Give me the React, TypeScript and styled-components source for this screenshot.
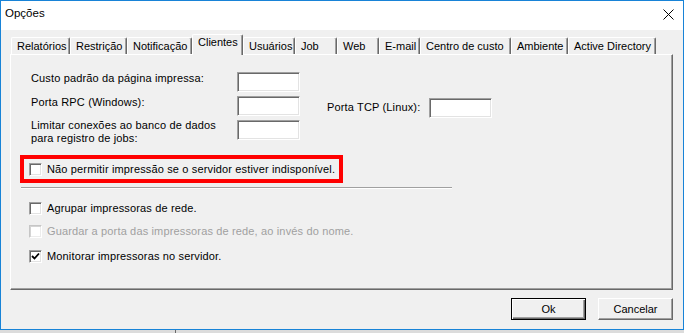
import React from 'react';
import styled, { createGlobalStyle } from 'styled-components';

const Global = createGlobalStyle`
  html, body { margin: 0; padding: 0; background: #dcdcdc; }
  body { font-family: "Liberation Sans", Arial, sans-serif; font-size: 11px; color: #000; }
  * { box-sizing: border-box; }
`;

const Window = styled.div`
  width: 684px;
  height: 330px;
  border: 1px solid #1883d7;
  display: flex;
  flex-direction: column;
  background: #f0f0f0;
`;

const TitleBar = styled.div`
  height: 29px;
  flex: none;
  background: #fff;
  display: flex;
  align-items: flex-start;
  justify-content: space-between;
  padding: 5px 9px 0 4px;
`;

const Title = styled.span`
  font-size: 11.5px;
  line-height: 14px;
  color: #000;
`;

const CloseBtn = styled.span`
  display: flex;
  margin-top: 3px;
`;

const Body = styled.div`
  flex: 1;
  display: flex;
  flex-direction: column;
  padding: 4px 10px 9px 9px;
`;

const TabStrip = styled.div`
  height: 20px;
  flex: none;
  display: flex;
  align-items: flex-end;
  padding-left: 1px;
  position: relative;
  z-index: 1;
`;

const Tab = styled.div<{ $w: number; $sel?: boolean }>`
  width: ${(p) => p.$w}px;
  height: ${(p) => (p.$sel ? 21 : 17)}px;
  margin-bottom: ${(p) => (p.$sel ? -1 : 0)}px;
  background: #f0f0f0;
  border-top: 1px solid #fff;
  border-left: 1px solid #fff;
  border-right: 1px solid #696969;
  box-shadow: inset -1px 0 0 #a0a0a0;
  border-radius: 2px 2px 0 0;
  padding: ${(p) => (p.$sel ? 1 : 2)}px 0 0 5px;
  line-height: 13px;
  white-space: nowrap;
`;

const Panel = styled.div`
  flex: 1;
  display: flex;
  flex-direction: column;
  border-top: 1px solid #fff;
  border-left: 1px solid #fff;
  border-right: 1px solid #696969;
  border-bottom: 1px solid #696969;
  box-shadow: inset -1px -1px 0 #a0a0a0;
  padding: 17px 0 0 9px;
  letter-spacing: 0.15px;
`;

const Form = styled.div`
  margin-left: 11px;
  display: grid;
  grid-auto-rows: 20px;
  row-gap: 4px;
`;

const FormRow = styled.div`
  display: flex;
  align-items: flex-start;
`;

const Label = styled.div<{ $w: number; $dy?: number }>`
  width: ${(p) => p.$w}px;
  line-height: 13px;
  margin-top: ${(p) => p.$dy ?? 0}px;
  white-space: nowrap;
`;

const Field = styled.div<{ $dy?: number }>`
  width: 63px;
  height: 20px;
  margin-top: ${(p) => p.$dy ?? 0}px;
  background: #fff;
  border-top: 1px solid #a0a0a0;
  border-left: 1px solid #a0a0a0;
  border-right: 1px solid #fff;
  border-bottom: 1px solid #fff;
  box-shadow: inset 1px 1px 0 #696969, inset -1px -1px 0 #e3e3e3;
`;

const Spacer = styled.div<{ $w: number }>`
  width: ${(p) => p.$w}px;
  flex: none;
`;

const Highlight = styled.div`
  margin-top: 15px;
  width: 323px;
  height: 28px;
  border: 4px solid #ff0000;
  display: flex;
  align-items: center;
  padding-left: 5px;
`;

const Separator = styled.div`
  margin: 4px 0 0 1px;
  width: 431px;
  height: 2px;
  border-top: 1px solid #a0a0a0;
  border-bottom: 1px solid #fff;
`;

const CheckRow = styled.div<{ $mt?: number; $disabled?: boolean }>`
  display: flex;
  align-items: center;
  gap: 5px;
  margin: ${(p) => p.$mt ?? 0}px 0 0 9px;
  height: 13px;
  color: ${(p) => (p.$disabled ? '#a0a0a0' : '#000')};
  line-height: 13px;
  white-space: nowrap;
`;

const InlineCheck = styled(CheckRow)`
  margin: 0;
`;

const Box = styled.div<{ $disabled?: boolean }>`
  width: 13px;
  height: 13px;
  flex: none;
  background: #fff;
  border-top: 1px solid ${(p) => (p.$disabled ? '#c6c6c6' : '#a0a0a0')};
  border-left: 1px solid ${(p) => (p.$disabled ? '#c6c6c6' : '#a0a0a0')};
  border-right: 1px solid #fff;
  border-bottom: 1px solid #fff;
  box-shadow: ${(p) =>
    p.$disabled
      ? 'inset 1px 1px 0 #d4d4d4, inset -1px -1px 0 #ececec'
      : 'inset 1px 1px 0 #696969, inset -1px -1px 0 #e3e3e3'};
  display: flex;
  align-items: center;
  justify-content: center;
`;

const ButtonRow = styled.div`
  margin-top: 8px;
  height: 22px;
  flex: none;
  display: flex;
  justify-content: flex-end;
  gap: 12px;
`;

const Button = styled.div<{ $default?: boolean }>`
  width: 75px;
  height: 22px;
  display: flex;
  align-items: center;
  justify-content: center;
  background: #f0f0f0;
  line-height: 13px;
  ${(p) =>
    p.$default
      ? `border: 1px solid #000;
         box-shadow: inset 1px 1px 0 #fff, inset -1px -1px 0 #696969, inset -2px -2px 0 #a0a0a0;`
      : `border-top: 1px solid #fff;
         border-left: 1px solid #fff;
         border-right: 1px solid #696969;
         border-bottom: 1px solid #696969;
         box-shadow: inset -1px -1px 0 #a0a0a0;`}
`;

const Below = styled.div`
  height: 3px;
  padding-left: 175px;
  display: flex;
`;

const BelowLine = styled.div`
  width: 1px;
  background: #6a6a6a;
`;

const tabs: { label: string; w: number; sel?: boolean }[] = [
  { label: 'Relatórios', w: 59 },
  { label: 'Restrição', w: 57 },
  { label: 'Notificação', w: 65 },
  { label: 'Clientes', w: 51, sel: true },
  { label: 'Usuários', w: 52 },
  { label: 'Job', w: 42 },
  { label: 'Web', w: 42 },
  { label: 'E-mail', w: 41 },
  { label: 'Centro de custo', w: 91 },
  { label: 'Ambiente', w: 57 },
  { label: 'Active Directory', w: 88 },
];

const Check = () => (
  <svg width="9" height="9" viewBox="0 0 9 9">
    <polyline points="1,4 3.5,6.5 8,1.5" fill="none" stroke="#000" strokeWidth="1.8" />
  </svg>
);

export default function App() {
  return (
    <>
      <Global />
      <Window>
        <TitleBar>
          <Title>Opções</Title>
          <CloseBtn>
            <svg width="11" height="11" viewBox="0 0 11 11">
              <path d="M0.5 0.5 L10.5 10.5 M10.5 0.5 L0.5 10.5" stroke="#000" strokeWidth="1" />
            </svg>
          </CloseBtn>
        </TitleBar>
        <Body>
          <TabStrip>
            {tabs.map((t) => (
              <Tab key={t.label} $w={t.w} $sel={t.sel}>
                {t.label}
              </Tab>
            ))}
          </TabStrip>
          <Panel>
            <Form>
              <FormRow>
                <Label $w={206}>Custo padrão da página impressa:</Label>
                <Field />
              </FormRow>
              <FormRow>
                <Label $w={206}>Porta RPC (Windows):</Label>
                <Field />
                <Spacer $w={27} />
                <Label $w={102} $dy={5}>Porta TCP (Linux):</Label>
                <Field $dy={2} />
              </FormRow>
              <FormRow>
                <Label $w={206} $dy={-1}>
                  Limitar conexões ao banco de dados
                  <br />
                  para registro de jobs:
                </Label>
                <Field />
              </FormRow>
            </Form>
            <Highlight>
              <InlineCheck>
                <Box />
                Não permitir impressão se o servidor estiver indisponível.
              </InlineCheck>
            </Highlight>
            <Separator />
            <CheckRow $mt={13}>
              <Box />
              Agrupar impressoras de rede.
            </CheckRow>
            <CheckRow $mt={10} $disabled>
              <Box $disabled />
              Guardar a porta das impressoras de rede, ao invés do nome.
            </CheckRow>
            <CheckRow $mt={12}>
              <Box>
                <Check />
              </Box>
              Monitorar impressoras no servidor.
            </CheckRow>
          </Panel>
          <ButtonRow>
            <Button $default>Ok</Button>
            <Button>Cancelar</Button>
          </ButtonRow>
        </Body>
      </Window>
      <Below>
        <BelowLine />
      </Below>
    </>
  );
}
